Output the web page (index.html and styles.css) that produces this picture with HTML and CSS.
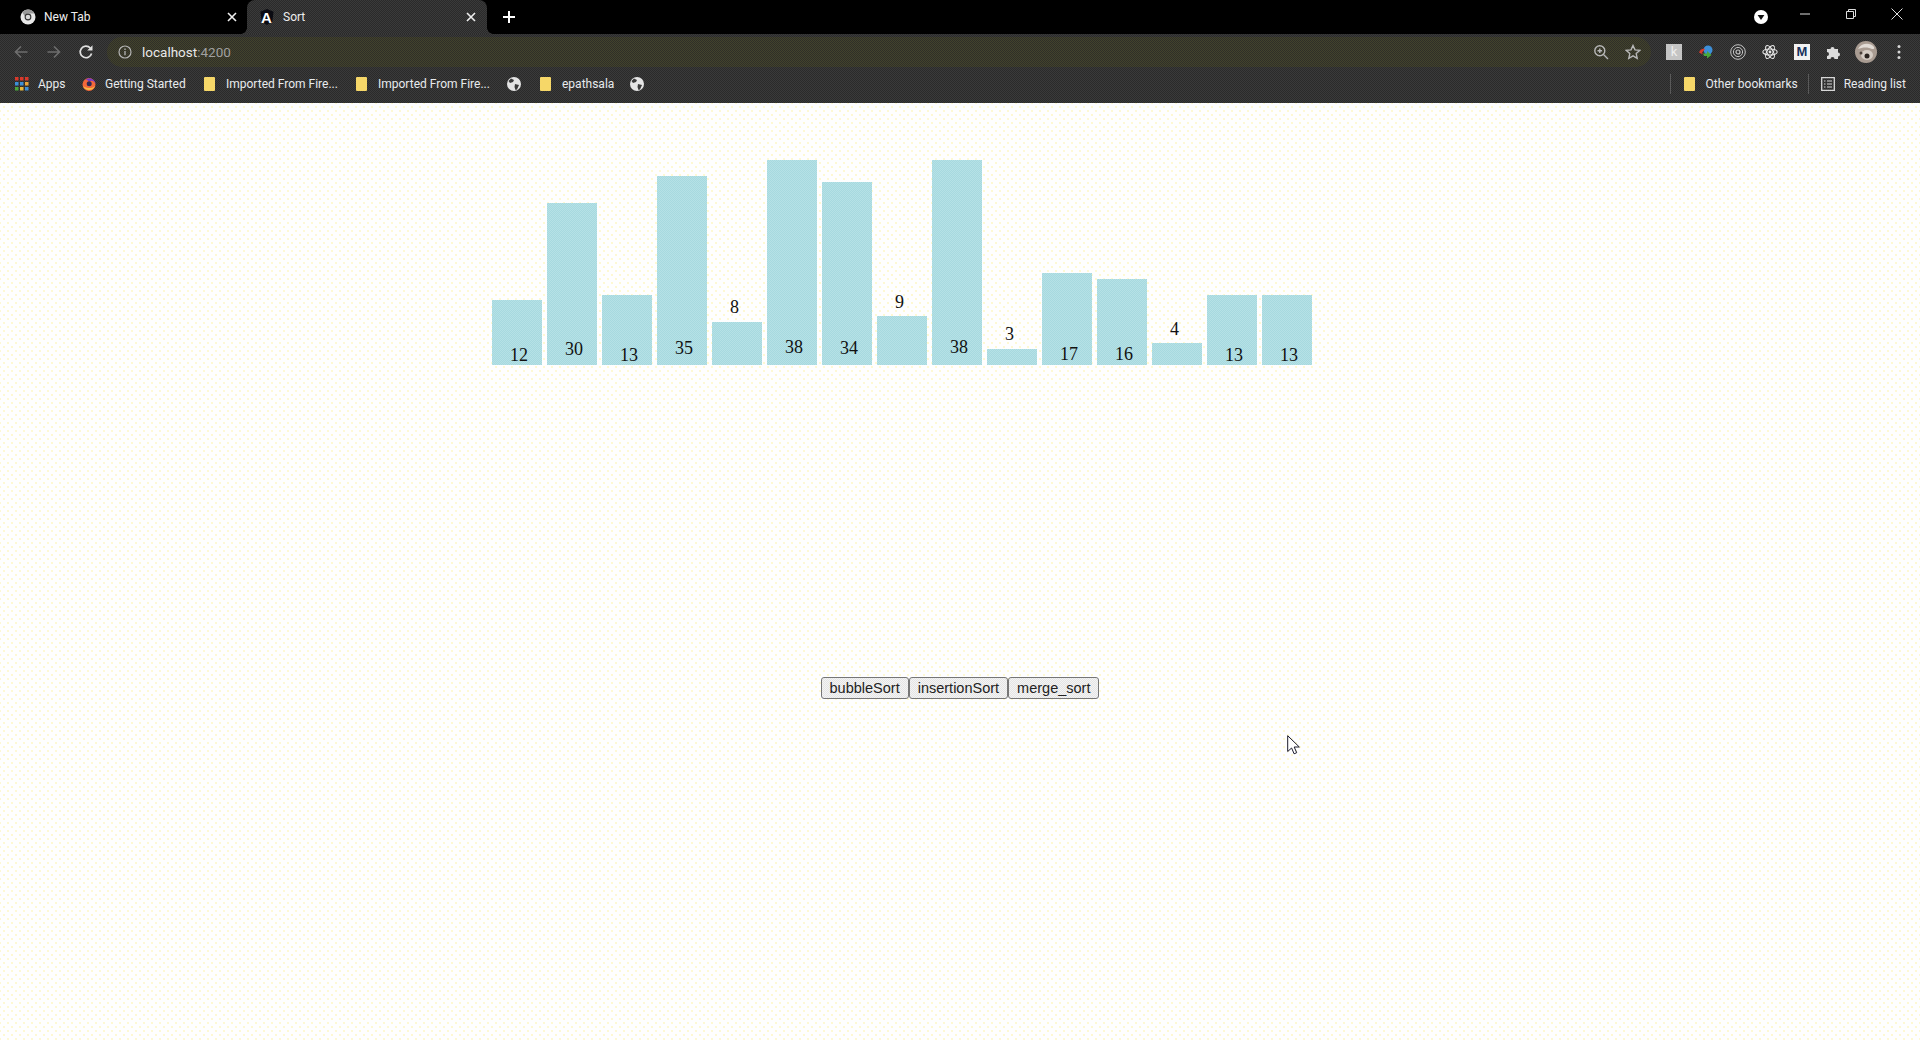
FILE: index.html
```html
<!DOCTYPE html>

<html>
    <head>
        <title>Sort</title>
        <meta charset="UTF-8">
        <link rel="stylesheet" href="styles.css">
    </head>
    <body>
        <!-- browser frame -->
        <div class="tabstrip">
            <div class="tab tab-new">
                <svg class="icon16" viewBox="0 0 16 16"><circle cx="8" cy="8" r="7.5" fill="#e8e8e8"/><path d="M8 .5a7.5 7.5 0 0 1 6.6 4H8a3.5 3.5 0 0 0-3.4 2.6L2.2 3.2A7.5 7.5 0 0 1 8 .5z" fill="#9a9a9a"/><circle cx="8" cy="8" r="3.4" fill="#333"/><circle cx="8" cy="8" r="2.300" fill="#d8d8d8"/></svg>
                <span class="tab-title">New Tab</span>
                <svg class="tab-close" viewBox="0 0 10 10"><path d="M1 1l8 8M9 1l-8 8" stroke="#f0f0f0" stroke-width="1.6"/></svg>
            </div>
            <div class="tab tab-active">
                <svg class="icon16" viewBox="0 0 16 16"><path d="M8 0l6.500 2.800-1.200 9.800L8 16l-5.300-3.400L1.500 2.800z" fill="#0b0b12"/><text x="7.500" y="14" class="angular-a">A</text></svg>
                <span class="tab-title">Sort</span>
                <svg class="tab-close" viewBox="0 0 10 10"><path d="M1 1l8 8M9 1l-8 8" stroke="#f0f0f0" stroke-width="1.6"/></svg>
            </div>
            <svg class="new-tab" viewBox="0 0 14 14"><path d="M7 1v12M1 7h12" stroke="#fff" stroke-width="2"/></svg>
            <div class="window-controls">
                <svg class="profile-drop" viewBox="0 0 14 14"><circle cx="7" cy="7" r="7" fill="#fff"/><path d="M3.6 5h6.8L7 10z" fill="#111"/></svg>
                <svg class="win-btn" viewBox="0 0 12 12"><path d="M1 6h10" stroke="#ddd" stroke-width="1"/></svg>
                <svg class="win-btn" viewBox="0 0 12 12"><path d="M1.5 3.5h7v7h-7zM3.5 3.5v-2h7v7h-2" fill="none" stroke="#ddd" stroke-width="1"/></svg>
                <svg class="win-btn win-close" viewBox="0 0 12 12"><path d="M.5.5l11 11M11.5.5l-11 11" stroke="#ddd" stroke-width="1"/></svg>
            </div>
        </div>

        <div class="toolbar">
            <svg class="nav-btn nav-back" viewBox="0 0 16 16"><path d="M14.5 8H2.5M8 2.500L2.500 8 8 13.500" fill="none" stroke="#6e6e6e" stroke-width="1.6"/></svg>
            <svg class="nav-btn" viewBox="0 0 16 16"><path d="M1.5 8h12M8 2.500L13.500 8 8 13.500" fill="none" stroke="#6e6e6e" stroke-width="1.6"/></svg>
            <svg class="nav-btn" viewBox="0 0 16 16"><path d="M13.600 9.500A5.800 5.800 0 1 1 12.300 4" fill="none" stroke="#e0e0e0" stroke-width="1.700"/><path d="M14.500 1.200v5.300H9.200z" fill="#e0e0e0"/></svg>
            <div class="omnibox">
                <svg class="icon14" viewBox="0 0 14 14"><circle cx="7" cy="7" r="6" fill="none" stroke="#b4b4b4" stroke-width="1.200"/><path d="M7 6v4.300M7 3.500v1.400" stroke="#b4b4b4" stroke-width="1.300"/></svg>
                <span class="url">localhost<span class="url-port">:4200</span></span>
                <div class="omni-right">
                    <svg class="icon16" viewBox="0 0 16 16"><circle cx="6.800" cy="6.800" r="5" fill="none" stroke="#b8b8b8" stroke-width="1.400"/><path d="M10.500 10.500L15 15M4.500 6.800h4.600M6.800 4.500v4.600" stroke="#b8b8b8" stroke-width="1.400"/></svg>
                    <svg class="icon16" viewBox="0 0 16 16"><path d="M8 1.500l2 4.400 4.700.5-3.500 3.200 1 4.700L8 11.900l-4.200 2.400 1-4.700-3.500-3.200 4.700-.5z" fill="none" stroke="#b8b8b8" stroke-width="1.400"/></svg>
                </div>
            </div>
            <div class="extensions">
                <div class="ext ext-k">k</div>
                <svg class="ext" viewBox="0 0 16 16"><circle cx="10" cy="6" r="4.500" fill="#3d8fd8"/><path d="M1 8.500C2 5 5 4 7 5L5 7.500c-1 .5-1 2 0 3z" fill="#d8392b"/><path d="M5 9.500h4V7l4.500 4-4.500 3.500V12H6z" fill="#4aa83a"/></svg>
                <svg class="ext" viewBox="0 0 16 16"><g fill="none" stroke="#c4c4c4"><circle cx="8" cy="8" r="7.300" stroke-width="1"/><circle cx="8" cy="8" r="4.600" stroke-width="1"/><circle cx="8" cy="8" r="2" stroke-width="1.200"/></g></svg>
                <svg class="ext" viewBox="0 0 16 16"><g fill="none" stroke="#e6e6e6" stroke-width="1.100"><ellipse cx="8" cy="8" rx="7.200" ry="3"/><ellipse cx="8" cy="8" rx="7.200" ry="3" transform="rotate(60 8 8)"/><ellipse cx="8" cy="8" rx="7.200" ry="3" transform="rotate(120 8 8)"/></g><circle cx="8" cy="8" r="1.400" fill="#e6e6e6"/></svg>
                <div class="ext ext-m">M</div>
                <svg class="ext" viewBox="0 0 16 16"><path d="M1 5h3.500a2 2 0 1 1 4 0H12v3.500a2 2 0 1 1 0 4V15H8.500a2 2 0 1 0-4 0H1v-3a2 2 0 1 0 0-4z" fill="#dcdcdc"/></svg>
                <svg class="avatar" viewBox="0 0 22 22"><circle cx="11" cy="11" r="11" fill="#a99c92"/><path d="M3 8c3-6 12-7 16-2 1 3-2 2-5 1-4-1-8 0-11 1z" fill="#e2dcd6"/><ellipse cx="12" cy="14" rx="6" ry="5" fill="#d4ccc4"/><circle cx="12" cy="15" r="2.500" fill="#2a2420"/><circle cx="6" cy="12" r="1.500" fill="#4a403a"/></svg>
                <svg class="menu-dots" viewBox="0 0 4 16"><circle cx="2" cy="2.500" r="1.500" fill="#d8d8d8"/><circle cx="2" cy="8" r="1.500" fill="#d8d8d8"/><circle cx="2" cy="13.500" r="1.500" fill="#d8d8d8"/></svg>
            </div>
        </div>

        <div class="bookmarks">
            <div class="bm bm-apps">
                <svg class="icon14" viewBox="0 0 14 14"><g fill="#d8392b"><rect x="0" y="0" width="3.500" height="3.500"/><rect x="5" y="0" width="3.500" height="3.500"/><rect x="10" y="0" width="3.500" height="3.500"/></g><rect x="0" y="5" width="3.500" height="3.500" fill="#3d8fd8"/><rect x="5" y="5" width="3.500" height="3.500" fill="#3d8fd8"/><rect x="10" y="5" width="3.500" height="3.500" fill="#e8a33a"/><rect x="0" y="10" width="3.500" height="3.500" fill="#4aa83a"/><rect x="5" y="10" width="3.500" height="3.500" fill="#e8b83a"/><rect x="10" y="10" width="3.500" height="3.500" fill="#3d8fd8"/></svg>
                <span>Apps</span>
            </div>
            <div class="bm bm-ff">
                <svg class="icon14" viewBox="0 0 14 14"><circle cx="7" cy="7.500" r="6.500" fill="#f2683a"/><path d="M1 9a6.500 6.500 0 0 0 12 0c-2 2.500-8 3-12 0z" fill="#f5b942"/><path d="M4 2.500A6 6 0 0 1 13.500 7C12.500 4 9 3 7 4.500 6 3.500 5 3 4 2.500z" fill="#7a3bc4"/><circle cx="7.200" cy="6.800" r="2.500" fill="#2d2a55"/></svg>
                <span>Getting Started</span>
            </div>
            <div class="bm bm-f1">
                <span class="folder"></span>
                <span>Imported From Fire...</span>
            </div>
            <div class="bm bm-f2">
                <span class="folder"></span>
                <span>Imported From Fire...</span>
            </div>
            <svg class="icon14 globe-a" viewBox="0 0 14 14"><circle cx="7" cy="7" r="7" fill="#e4e4e4"/><path d="M4 1.500l3 1.500-1 2-3 1-1.500-2zM8 7l4 1-2 4.500-1.500.5-1-3z" fill="#3a3a3a"/></svg>
            <div class="bm bm-f3">
                <span class="folder"></span>
                <span>epathsala</span>
            </div>
            <svg class="icon14 globe-b" viewBox="0 0 14 14"><circle cx="7" cy="7" r="7" fill="#e4e4e4"/><path d="M4 1.500l3 1.500-1 2-3 1-1.500-2zM8 7l4 1-2 4.500-1.500.5-1-3z" fill="#3a3a3a"/></svg>
            <div class="bm-right">
                <span class="bm-sep"></span>
                <div class="bm bm-other">
                    <span class="folder"></span>
                    <span>Other bookmarks</span>
                </div>
                <span class="bm-sep"></span>
                <div class="bm bm-read">
                    <svg class="icon14" viewBox="0 0 14 14"><path d="M.7.700h12.600v12.600H.7z" fill="none" stroke="#d8d8d8" stroke-width="1.300"/><path d="M3 4h1.500M6 4h5M3 7h1.500M6 7h5M3 10h1.500M6 10h5" stroke="#d8d8d8" stroke-width="1.200"/></svg>
                    <span>Reading list</span>
                </div>
            </div>
        </div>

        <!-- the page -->
        <div class="page">
            <div class="chart">
                <div class="bar" style="height: 65px"><span class="value" style="bottom: 1px">12</span></div>
                <div class="bar" style="height: 162px"><span class="value" style="bottom: 7px">30</span></div>
                <div class="bar" style="height: 70px"><span class="value" style="bottom: 1px">13</span></div>
                <div class="bar" style="height: 189px"><span class="value" style="bottom: 8px">35</span></div>
                <div class="bar" style="height: 43px"><span class="value" style="bottom: 49px">8</span></div>
                <div class="bar" style="height: 205px"><span class="value" style="bottom: 9px">38</span></div>
                <div class="bar" style="height: 183px"><span class="value" style="bottom: 8px">34</span></div>
                <div class="bar" style="height: 49px"><span class="value" style="bottom: 54px">9</span></div>
                <div class="bar" style="height: 205px"><span class="value" style="bottom: 9px">38</span></div>
                <div class="bar" style="height: 16px"><span class="value" style="bottom: 22px">3</span></div>
                <div class="bar" style="height: 92px"><span class="value" style="bottom: 2px">17</span></div>
                <div class="bar" style="height: 86px"><span class="value" style="bottom: 2px">16</span></div>
                <div class="bar" style="height: 22px"><span class="value" style="bottom: 27px">4</span></div>
                <div class="bar" style="height: 70px"><span class="value" style="bottom: 1px">13</span></div>
                <div class="bar" style="height: 70px"><span class="value" style="bottom: 1px">13</span></div>
            </div>
            <div class="controls">
                <button class="sort-btn">bubbleSort</button>
                <button class="sort-btn">insertionSort</button>
                <button class="sort-btn">merge_sort</button>
            </div>
        </div>

        <!-- mouse pointer -->
        <svg class="cursor" viewBox="0 0 13 20"><path d="M.7.700v15.800l3.900-3.500 2.500 5.800 2.600-1.100-2.500-5.700h5.100z" fill="#fff" stroke="#1a1a2a" stroke-width="1"/></svg>
    </body>
</html>
```

FILE: styles.css
```css
* {
    box-sizing: border-box;
}
html, body {
    height: 100%;
}
body {
    margin: 0;
    overflow: hidden;
    position: relative;
    display: flex;
    flex-direction: column;
    background: #fff;
    font-family: Roboto, "Liberation Sans", sans-serif;
}
svg {
    display: block;
    flex: none;
}
.icon16 {
    width: 16px;
    height: 16px;
}
.icon14 {
    width: 14px;
    height: 14px;
}

/* tab strip */
.tabstrip {
    height: 34px;
    flex: none;
    display: flex;
    background: #000;
}
.tab {
    height: 34px;
    display: flex;
    align-items: center;
    font-size: 12px;
    color: #eee;
}
.tab-new {
    width: 247px;
    padding: 0 10px 0 20px;
}
.tab-new .tab-title {
    margin-left: 8px;
}
.tab-active {
    position: relative;
    width: 240px;
    padding: 0 11px 0 12px;
    border-radius: 8px 8px 0 0;
    background: repeating-conic-gradient(#3a3a3a 0 25%, #2a2a2a 0 50%) 0 0 / 2px 2px;
}
.tab-active .tab-title {
    margin-left: 8px;
}
.tab-active::before, .tab-active::after {
    content: "";
    position: absolute;
    bottom: 0;
    width: 6px;
    height: 6px;
}
.tab-active::before {
    left: -6px;
    background: radial-gradient(circle at 0 0, #000 5.500px, #323232 6px);
}
.tab-active::after {
    right: -6px;
    background: radial-gradient(circle at 100% 0, #000 5.500px, #323232 6px);
}
.angular-a {
    font: bold 15px "Liberation Sans", sans-serif;
    fill: #fff;
    text-anchor: middle;
}
.tab-close {
    width: 10px;
    height: 10px;
    margin-left: auto;
}
.new-tab {
    width: 14px;
    height: 14px;
    margin: 10px 0 0 15px;
}
.window-controls {
    margin-left: auto;
    display: flex;
    align-items: flex-start;
}
.profile-drop {
    width: 14px;
    height: 14px;
    margin: 10px 31px 0 0;
}
.win-btn {
    width: 12px;
    height: 12px;
    margin: 8px 34px 0 0;
}
.win-close {
    margin-right: 17px;
}

/* toolbar */
.toolbar {
    height: 36px;
    flex: none;
    display: flex;
    align-items: center;
    padding-left: 13px;
    background: repeating-conic-gradient(#3a3a3a 0 25%, #2a2a2a 0 50%) 0 0 / 2px 2px;
}
.nav-btn {
    width: 16px;
    height: 16px;
    margin-right: 16px;
}
.nav-back {
    margin-right: 17px;
}
.omnibox {
    width: 1544px;
    height: 30px;
    margin-left: -3px;
    display: flex;
    align-items: center;
    padding: 0 10px 0 11px;
    border-radius: 15px;
    background: repeating-conic-gradient(#43432c 0 25%, #2f2f28 0 50%) 0 0 / 2px 2px;
}
.url {
    margin-left: 10px;
    font-size: 13.500px;
    color: #e8e8e8;
}
.url-port {
    color: #a0a0a0;
}
.omni-right {
    margin-left: auto;
    display: flex;
    gap: 16px;
}
.extensions {
    display: flex;
    align-items: center;
    margin-left: 15px;
}
.ext {
    width: 16px;
    height: 16px;
    margin-right: 16px;
}
.ext-k {
    background: #c4c4c4;
    color: #eee;
    font-size: 13px;
    line-height: 16px;
    text-align: center;
}
.ext-m {
    background: #f2f2f2;
    color: #16305c;
    font: bold 13px/16px "Liberation Sans", sans-serif;
    text-align: center;
}
.avatar {
    width: 22px;
    height: 22px;
    margin: 0 20px 0 -3px;
}
.menu-dots {
    width: 4px;
    height: 16px;
}

/* bookmarks bar */
.bookmarks {
    height: 33px;
    flex: none;
    display: flex;
    align-items: center;
    padding: 0 0 5px 15px;
    font-size: 12px;
    color: #e8eaed;
    background: repeating-conic-gradient(#3a3a3a 0 25%, #2a2a2a 0 50%) 0 0 / 2px 2px;
}
.bm {
    display: flex;
    align-items: center;
    white-space: nowrap;
}
.bm-apps svg {
    margin-right: 9px;
}
.bm-apps {
    width: 67px;
}
.bm-ff svg {
    margin-right: 9px;
}
.bm-ff {
    width: 122px;
}
.folder {
    width: 11px;
    height: 14px;
    margin-right: 11px;
    background: #f6d768;
    border-radius: 1px;
}
.bm-f1, .bm-f2 {
    width: 152px;
}
.globe-a {
    margin: 0 19px 0 -1px;
}
.bm-f3 {
    width: 90px;
}
.bm-right {
    margin-left: auto;
    display: flex;
    align-items: center;
    padding-right: 14px;
}
.bm-sep {
    width: 1px;
    height: 20px;
    background: #5a5a5a;
}
.bm-other {
    margin: 0 10px 0 13px;
}
.bm-read {
    margin-left: 12px;
}
.bm-read svg {
    margin-right: 9px;
}

/* page */
.page {
    flex: 1;
    padding-top: 57px;
    background-color: #fefefe;
    background-image:
        radial-gradient(circle, #fdf6c4 0 .6px, transparent 1px),
        radial-gradient(circle, #fdf6c4 0 .6px, transparent 1px);
    background-size: 8px 8px;
    background-position: 0 0, 4px 4px;
}
.chart {
    height: 205px;
    margin-left: 492px;
    display: flex;
    align-items: flex-end;
    gap: 5px;
}
.bar {
    position: relative;
    width: 50px;
    background: repeating-conic-gradient(#a6d9df 0 25%, #b6e1e6 0 50%) 0 0 / 2px 2px;
}
.value {
    position: absolute;
    left: 18px;
    font: 18px/18px "Liberation Serif", serif;
    color: #111;
}
.controls {
    margin-top: 312px;
    display: flex;
    justify-content: center;
}
.sort-btn {
    margin: 0;
    padding: 1px 8px;
    border: 1px solid #767676;
    border-radius: 3px;
    font: 14.500px/18px "Liberation Sans", sans-serif;
    color: #222;
    background: repeating-conic-gradient(#f4f4f4 0 25%, #e4e4e4 0 50%) 0 0 / 2px 2px;
}
.cursor {
    position: absolute;
    left: 1287px;
    top: 735px;
    width: 13px;
    height: 20px;
}
```
